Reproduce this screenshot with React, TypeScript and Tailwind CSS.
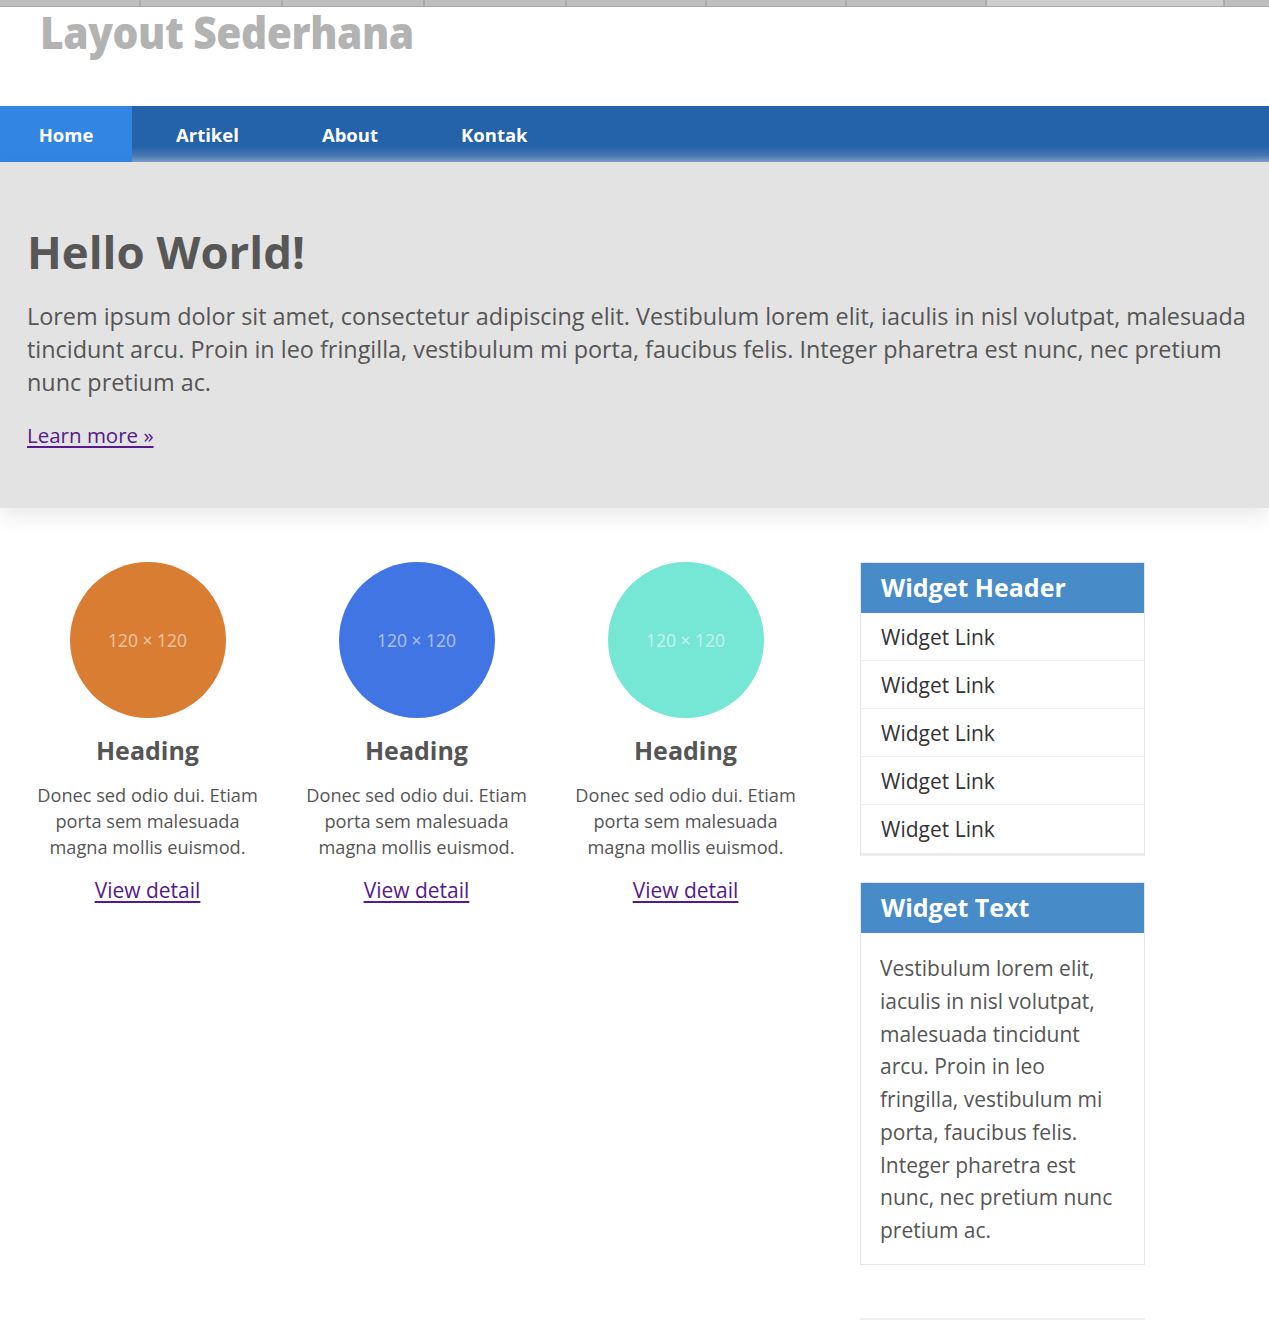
import React from "react";

const font = { fontFamily: '"Open Sans", "Liberation Sans", sans-serif' };

const strip = [141, 142, 142, 142, 140, 140, 140];

function Circle({ color }: { color: string }) {
  return (
    <div className={`w-[156px] h-[156px] rounded-full flex items-center justify-center mx-auto ${color}`}>
      <span className="text-[17.5px] text-white/55 font-normal">120 × 120</span>
    </div>
  );
}

function Col({ color }: { color: string }) {
  return (
    <div className="w-[269px] px-[20px] text-center">
      <Circle color={color} />
      <h2 className="mt-[17px] text-[25px] leading-[30px] font-bold text-[#555]">Heading</h2>
      <p className="mt-[17px] text-[18.2px] leading-[26px] text-[#555]">
        Donec sed odio dui. Etiam porta sem malesuada magna mollis euismod.
      </p>
      <a href="#" className="inline-block mt-[16px] text-[21px] leading-[28px] text-[#551a8b] underline underline-offset-[3px]">
        View detail
      </a>
    </div>
  );
}

export default function App() {
  const navItems = ["Home", "Artikel", "About", "Kontak"];
  return (
    <div style={font} className="bg-white min-h-[1340px] w-full overflow-hidden">
      {/* top strip */}
      <div className="flex h-[7px] border-b border-[#a9a9a9] bg-[#bfbfbf]">
        {strip.map((w, i) => (
          <div key={i} style={{ width: w }} className="h-full border-r-2 border-[#ababab] shrink-0" />
        ))}
        <div className="w-[238px] h-full bg-[#cdcdcd] border-r-2 border-[#ababab] shrink-0" />
        <div className="flex-1" />
      </div>
      {/* header */}
      <div className="h-[99px] pl-[40px] pt-[2px]">
        <h1 className="inline-block origin-left scale-x-[0.905] text-[45px] leading-[45px] font-extrabold text-[#b3b3b3] tracking-[-0.5px] whitespace-nowrap">
          Layout Sederhana
        </h1>
      </div>
      {/* nav */}
      <nav className="h-[56px] flex gap-[5px] bg-[linear-gradient(to_bottom,#2462a9_0%,#2462a9_72%,#4677b4_88%,#809fc6_100%)]">
        {navItems.map((n, i) => (
          <a
            key={n}
            href="#"
            className={`h-full flex items-center px-[39px] pt-[2px] text-[18.5px] font-bold text-white ${i === 0 ? "bg-[#3385e3] w-[132px] justify-center px-0" : ""}`}
          >
            {n}
          </a>
        ))}
      </nav>
      {/* hero */}
      <section className="relative bg-[#e3e3e3] pt-[63px] pb-[58px] pl-[27px] pr-[12px] shadow-[0_10px_18px_rgba(0,0,0,0.08)]">
        <h1 className="text-[45.5px] leading-[53px] font-bold text-[#575757]">Hello World!</h1>
        <p className="mt-[22px] text-[23.4px] leading-[33px] text-[#555]">
          Lorem ipsum dolor sit amet, consectetur adipiscing elit. Vestibulum lorem elit, iaculis in nisl volutpat, malesuada tincidunt arcu. Proin in leo fringilla, vestibulum mi porta, faucibus felis. Integer pharetra est nunc, nec pretium nunc pretium ac.
        </p>
        <a href="#" className="inline-block mt-[21px] text-[20.5px] leading-[30px] text-[#551a8b] underline underline-offset-[3px]">
          Learn more »
        </a>
      </section>
      {/* content */}
      <div className="flex pt-[54px] pl-[13px]">
        <div className="flex w-[807px] items-start">
          <Col color="bg-[#d97d33]" />
          <Col color="bg-[#4175e3]" />
          <Col color="bg-[#76e6d5]" />
        </div>
        <aside className="ml-[40px] w-[285px]">
          <div className="border border-[#e6e6e6] border-b-[3px] border-b-[#ececec]">
            <div className="h-[50px] bg-[#478bc9] flex items-center px-[20px] text-[25px] font-bold text-white">
              Widget Header
            </div>
            {[0, 1, 2, 3, 4].map((i) => (
              <div
                key={i}
                className={`h-[48px] flex items-center px-[20px] pt-[2px] text-[21px] text-[#333] ${i < 4 ? "border-b border-[#ececec]" : ""}`}
              >
                Widget Link
              </div>
            ))}
          </div>
          <div className="mt-[26px] border border-[#e6e6e6]">
            <div className="h-[50px] bg-[#478bc9] flex items-center px-[20px] text-[25px] font-bold text-white">
              Widget Text
            </div>
            <p className="pl-[19px] pr-[20px] pt-[19px] pb-[17px] text-[21px] leading-[32.75px] text-[#555]">
              Vestibulum lorem elit, iaculis in nisl volutpat, malesuada tincidunt arcu. Proin in leo fringilla, vestibulum mi porta, faucibus felis. Integer pharetra est nunc, nec pretium nunc pretium ac.
            </p>
          </div>
          <div className="mt-[53px] border-t-2 border-[#efefef] h-[40px]" />
        </aside>
      </div>
    </div>
  );
}
